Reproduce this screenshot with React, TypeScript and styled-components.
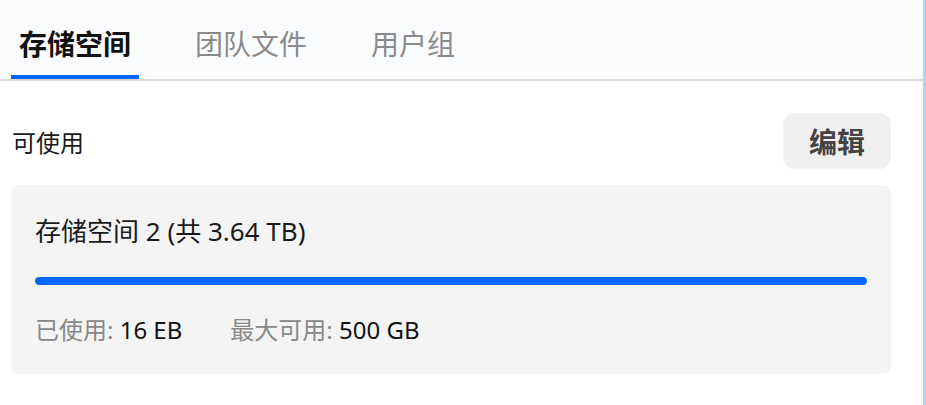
import styled, { createGlobalStyle } from 'styled-components';

const GlobalStyle = createGlobalStyle`
  html, body {
    margin: 0;
    padding: 0;
    background: #ffffff;
  }
  body {
    font-family: "Noto Sans", "Noto Sans CJK SC", sans-serif;
    color: #1a1a1a;
  }
`

const Page = styled.div`
  width: 923px;
  min-height: 405px;
  border-right: 3px solid #b3d1ff;
  background: #ffffff;
`

const TabBar = styled.div`
  display: flex;
  gap: 48px;
  padding: 24px 0 0 11px;
  background: #fbfcfe;
  border-bottom: 2px solid #d9d9d9;
`

const Tab = styled.div<{ active?: boolean }>`
  padding: 0 8px 11px;
  font-size: 28px;
  line-height: 40px;
  font-weight: ${props => props.active ? 700 : 400};
  color: ${props => props.active ? '#111111' : '#8a8a8a'};
  border-bottom: 4px solid ${props => props.active ? '#0066ff' : 'transparent'};
  cursor: pointer;
`

const Body = styled.div`
  padding: 32px 32px 0 11px;
  display: flex;
  flex-direction: column;
  gap: 16px;
`

const HeadRow = styled.div`
  display: flex;
  align-items: center;
  justify-content: space-between;
`

const Label = styled.span`
  padding-left: 1px;
  font-size: 24px;
  color: #1a1a1a;
`

const EditButton = styled.button`
  width: 108px;
  height: 56px;
  border: none;
  border-radius: 12px;
  background: #f0f0f0;
  color: #444444;
  font-family: inherit;
  font-size: 28px;
  font-weight: 700;
  cursor: pointer;
`

const Card = styled.div`
  background: #f4f4f4;
  border-radius: 8px;
  padding: 28px 24px 27px;
  display: flex;
  flex-direction: column;
  gap: 28px;
`

const CardTitle = styled.div`
  font-size: 26px;
  line-height: 36px;
  color: #1a1a1a;
`

const Track = styled.div`
  height: 8px;
  border-radius: 4px;
  background: #dddddd;
  overflow: hidden;
`

const Fill = styled.div`
  height: 100%;
  border-radius: 4px;
  background: #0066ff;
`

const Stats = styled.div`
  display: flex;
  gap: 48px;
  font-size: 24px;
  line-height: 34px;
`

const StatLabel = styled.span`
  color: #888888;
`

const StatValue = styled.span`
  color: #111111;
`

const tabs = ['存储空间', '团队文件', '用户组'];

export default function App() {
  const used = 1;

  return (
    <Page>
      <GlobalStyle />
      <TabBar>
        {tabs.map((t, idx) =>
          <Tab key={t} active={idx === 0}>{t}</Tab>
        )}
      </TabBar>
      <Body>
        <HeadRow>
          <Label>可使用</Label>
          <EditButton>编辑</EditButton>
        </HeadRow>
        <Card>
          <CardTitle>存储空间 2 (共 3.64 TB)</CardTitle>
          <Track>
            <Fill style={{ width: `${used * 100}%` }} />
          </Track>
          <Stats>
            <span><StatLabel>已使用: </StatLabel><StatValue>16 EB</StatValue></span>
            <span><StatLabel>最大可用: </StatLabel><StatValue>500 GB</StatValue></span>
          </Stats>
        </Card>
      </Body>
    </Page>
  );
}
